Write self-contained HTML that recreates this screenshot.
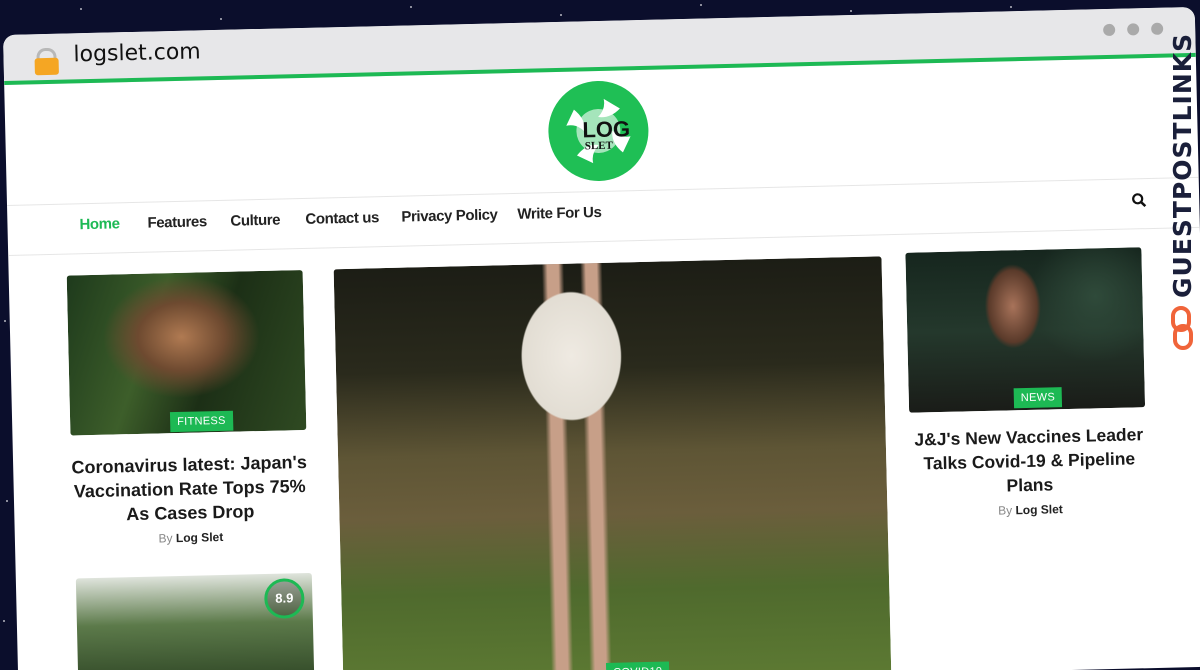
<!DOCTYPE html>
<html style="width:1200px;height:670px;overflow:hidden"><head><meta charset="utf-8"><style>
*{margin:0;padding:0;box-sizing:border-box}
body{width:1200px;height:670px;overflow:hidden;background:#0b0e2c;position:relative;font-family:"Liberation Sans",sans-serif}
.star{position:absolute;width:2px;height:2px;background:#fff;border-radius:50%;opacity:.7}
#clip{position:absolute;left:0;top:0;width:1200px;height:670px;overflow:hidden}
#win{position:absolute;left:3px;top:35px;width:1192px;height:660px;background:#fff;border-radius:12px;transform:rotate(-1.35deg);transform-origin:0 0;overflow:hidden}
.bar{position:absolute;left:0;top:0;width:100%;height:50px;background:#e7e7e9;border-bottom:4px solid #1db954}
.abs{position:absolute}
.nav a{position:absolute;top:183px;font-size:15px;font-weight:bold;color:#222;text-decoration:none;letter-spacing:-.4px}
.img{position:absolute;border-radius:3px;overflow:hidden}
.badge{position:absolute;background:#1db954;color:#fff;font-size:11px;padding:4px 7px;letter-spacing:.3px}
.title{position:absolute;text-align:center;font-weight:bold;font-size:18px;line-height:24px;color:#1a1a1a}
.by{position:absolute;text-align:center;font-size:12px;color:#888}
.by b{color:#222}
</style></head><body>
<div id="clip">
<div class="star" style="left:80px;top:8px"></div><div class="star" style="left:220px;top:18px"></div><div class="star" style="left:410px;top:6px"></div><div class="star" style="left:560px;top:14px"></div><div class="star" style="left:700px;top:4px"></div><div class="star" style="left:850px;top:10px"></div><div class="star" style="left:1010px;top:6px"></div><div class="star" style="left:4px;top:320px"></div><div class="star" style="left:6px;top:500px"></div><div class="star" style="left:3px;top:620px"></div>
<div id="win">
 <div class="bar"></div>
 <div class="abs" style="left:33px;top:14px;width:20px;height:14px;border:3px solid #b8b8b8;border-bottom:none;border-radius:9px 9px 0 0"></div>
 <div class="abs" style="left:31px;top:24px;width:24px;height:17px;background:#f5a623;border-radius:3px"></div>
 <div class="abs" style="left:70px;top:9px;font-size:22px;color:#111;font-family:'DejaVu Sans',sans-serif">logslet.com</div>
 <div class="abs" style="left:1100px;top:15px;width:12px;height:12px;border-radius:50%;background:#aaa"></div>
 <div class="abs" style="left:1124px;top:15px;width:12px;height:12px;border-radius:50%;background:#aaa"></div>
 <div class="abs" style="left:1148px;top:15px;width:12px;height:12px;border-radius:50%;background:#aaa"></div>
 <svg class="abs" style="left:541px;top:58px" width="104" height="104" viewBox="0 0 104 104">
  <circle cx="52" cy="52" r="50" fill="#1fbf55"/>
  <path d="M28 30 Q40 40 38 52 Q30 44 20 46Z M74 30 Q64 40 52 38 Q60 30 58 20Z M76 74 Q64 64 66 52 Q74 60 84 58Z M30 76 Q40 64 52 66 Q44 74 46 84Z" fill="#fff"/>
  <circle cx="52" cy="52" r="22" fill="#fff" opacity=".6"/>
  <text x="36" y="58" font-family="Liberation Sans Narrow,Liberation Sans" font-weight="bold" font-size="22" fill="#111">LOG</text>
  <text x="38" y="70" font-family="Liberation Serif" font-weight="bold" font-size="11" fill="#111">SLET</text>
 </svg>
 <div class="abs" style="left:0;top:170px;width:100%;height:1px;background:#e6e6e6"></div>
 <div class="abs" style="left:0;top:220px;width:100%;height:1px;background:#e6e6e6"></div>
 <div class="nav">
  <a style="left:72px;color:#1db954">Home</a><a style="left:140px">Features</a><a style="left:223px">Culture</a><a style="left:298px">Contact us</a><a style="left:394px">Privacy Policy</a><a style="left:510px">Write For Us</a>
 </div>
 <svg class="abs" style="left:1124px;top:184px" width="16" height="16" viewBox="0 0 16 16"><circle cx="6.5" cy="6.5" r="4.5" stroke="#111" stroke-width="2.2" fill="none"/><path d="M10 10 L14 14" stroke="#111" stroke-width="2.5"/></svg>

 <div class="img" style="left:58px;top:242px;width:236px;height:160px;background:radial-gradient(ellipse at 48% 40%,#b07a52 0,#6e4a30 25%,transparent 45%),linear-gradient(110deg,#1e3a1c,#3d5e2a 35%,#1c2f16 60%,#2f4a22)"></div>
 <div class="badge" style="left:158px;top:381px">FITNESS</div>
 <div class="title" style="left:56px;top:422px;width:240px">Coronavirus latest: Japan's Vaccination Rate Tops 75% As Cases Drop</div>
 <div class="by" style="left:56px;top:500px;width:240px">By <b>Log Slet</b></div>
 <div class="img" style="left:60px;top:545px;width:236px;height:160px;background:linear-gradient(180deg,#dfe4dc 0,#5c7a4a 30%,#2d4424 70%,#6b5a40)"></div>
 <div class="abs" style="left:248px;top:550px;width:40px;height:40px;border:3px solid #1db954;border-radius:50%;color:#fff;font-size:13px;font-weight:bold;text-align:center;line-height:34px;background:rgba(0,0,0,.25)">8.9</div>

 <div class="img" style="left:325px;top:242px;width:548px;height:420px;background:radial-gradient(ellipse 70px 90px at 43% 22%,#efeae2 0,#e2ddd3 70%,transparent 72%),linear-gradient(90deg,transparent 0 38%,#c79f88 39%,#c79f88 41%,transparent 42%, transparent 45%,#c79f88 46%,#c79f88 48%,transparent 49%),linear-gradient(180deg,#1c1d15 0,#2a2a1c 25%,#5e5535 45%,#6b5e3c 60%,#4f6a2d 78%,#5d7a33 100%)"></div>
 <div class="badge" style="left:588px;top:642px">COVID19</div>

 <div class="img" style="left:897px;top:239px;width:236px;height:160px;background:radial-gradient(ellipse 40px 60px at 45% 35%,#a8735a 0,#5a3a2a 60%,transparent 70%),radial-gradient(circle at 80% 30%,#2f4a3a 0,transparent 30%),linear-gradient(180deg,#16261e,#24382c 50%,#1a1c18)"></div>
 <div class="badge" style="left:1002px;top:377px">NEWS</div>
 <div class="title" style="left:896px;top:414px;width:240px;font-size:17.5px">J&amp;J's New Vaccines Leader Talks Covid-19 &amp; Pipeline Plans</div>
 <div class="by" style="left:896px;top:492px;width:240px">By <b>Log Slet</b></div>
</div>
<div class="abs" style="left:1168px;top:298px;transform:rotate(-90deg);transform-origin:0 0;font-size:25px;font-weight:bold;color:#1a1f3a;letter-spacing:1px;white-space:nowrap;font-family:'DejaVu Sans',sans-serif">GUESTPOSTLINKS</div>
<svg class="abs" style="left:1170px;top:305px" width="24" height="46" viewBox="0 0 24 46"><rect x="3" y="3" width="16" height="22" rx="8" fill="none" stroke="#f0643a" stroke-width="4"/><rect x="5" y="21" width="16" height="22" rx="8" fill="none" stroke="#f0643a" stroke-width="4"/></svg>
</div>
</body></html>
